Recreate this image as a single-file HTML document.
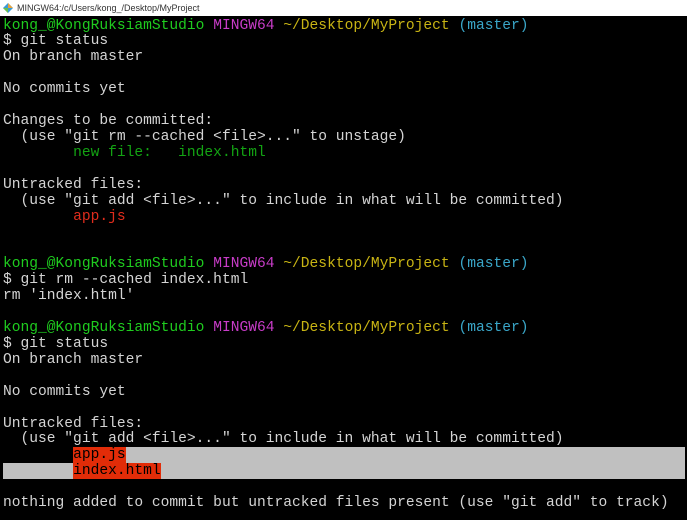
<!DOCTYPE html>
<html><head><meta charset="utf-8"><style>
html,body{margin:0;padding:0;width:687px;height:520px;overflow:hidden;background:#000;}
.title{position:absolute;left:0;top:0;width:687px;height:16px;background:#fff;font-family:"Liberation Sans",sans-serif;font-size:9px;color:#333;line-height:16px;z-index:2;}
.title span{position:absolute;left:17px;top:0;}
.ic{position:absolute;left:3px;top:3px;width:10px;height:10px;}
.term{position:absolute;left:3px;top:18.5px;font-family:"Liberation Mono",monospace;font-size:14.6px;line-height:15.93px;color:#d4d4d4;}
.l{height:15.93px;position:relative;white-space:pre;}
.g{color:#1fcc1f}.m{color:#c83cc8}.y{color:#c8b414}.c{color:#3aa6c8}.ng{color:#13a313}.r{color:#e02c1c}
.sel{position:absolute;top:-1px;height:15.93px;background:#c0c0c0;}
.hr{background:#e22c08;color:#000;position:relative;}
</style></head><body>
<div class="title"><svg class="ic" viewBox="0 0 10 10"><polygon points="5,0 10,5 5,10 0,5" fill="#3a9ad9"/><polygon points="5,0 10,5 5,5" fill="#e8a33b"/><polygon points="0,5 5,10 5,5" fill="#6cc04a"/></svg><span>MINGW64:/c/Users/kong_/Desktop/MyProject</span></div>
<div class="term"><div class="l"><span class="g">kong_@KongRuksiamStudio</span> <span class="m">MINGW64</span> <span class="y">~/Desktop/MyProject</span> <span class="c">(master)</span></div><div class="l">$ git status</div><div class="l">On branch master</div><div class="l"></div><div class="l">No commits yet</div><div class="l"></div><div class="l">Changes to be committed:</div><div class="l">  (use "git rm --cached &lt;file&gt;..." to unstage)</div><div class="l">        <span class="ng">new file:   index.html</span></div><div class="l"></div><div class="l">Untracked files:</div><div class="l">  (use "git add &lt;file&gt;..." to include in what will be committed)</div><div class="l">        <span class="r">app.js</span></div><div class="l"></div><div class="l"></div><div class="l"><span class="g">kong_@KongRuksiamStudio</span> <span class="m">MINGW64</span> <span class="y">~/Desktop/MyProject</span> <span class="c">(master)</span></div><div class="l">$ git rm --cached index.html</div><div class="l">rm 'index.html'</div><div class="l"></div><div class="l"><span class="g">kong_@KongRuksiamStudio</span> <span class="m">MINGW64</span> <span class="y">~/Desktop/MyProject</span> <span class="c">(master)</span></div><div class="l">$ git status</div><div class="l">On branch master</div><div class="l"></div><div class="l">No commits yet</div><div class="l"></div><div class="l">Untracked files:</div><div class="l">  (use "git add &lt;file&gt;..." to include in what will be committed)</div><div class="l"><div class="sel" style="left:70px;width:612px"></div>        <span class="hr">app.js</span></div><div class="l"><div class="sel" style="left:0;width:682px"></div>        <span class="hr">index.html</span></div><div class="l"></div><div class="l">nothing added to commit but untracked files present (use "git add" to track)</div></div>
</body></html>
